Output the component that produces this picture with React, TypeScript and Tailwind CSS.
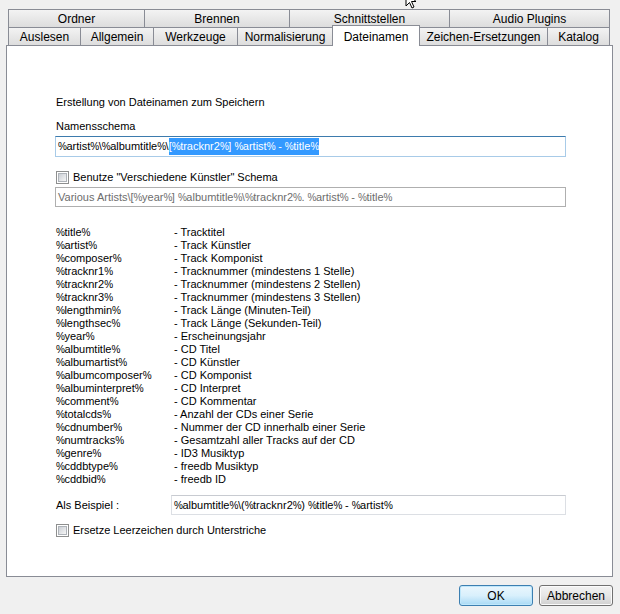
import React from "react";

const font = { fontFamily: '"Liberation Sans", Arial, sans-serif' };

const row1 = [
  { label: "Ordner", w: 137 },
  { label: "Brennen", w: 145 },
  { label: "Schnittstellen", w: 160 },
  { label: "Audio Plugins", w: 160 },
];

const row2 = [
  { label: "Auslesen", w: 73 },
  { label: "Allgemein", w: 73 },
  { label: "Werkzeuge", w: 84 },
  { label: "Normalisierung", w: 95 },
  { label: "Dateinamen", w: 87, active: true },
  { label: "Zeichen-Ersetzungen", w: 128 },
  { label: "Katalog", w: 62 },
];

const vars: [string, string][] = [
  ["%title%", "- Tracktitel"],
  ["%artist%", "- Track Künstler"],
  ["%composer%", "- Track Komponist"],
  ["%tracknr1%", "- Tracknummer (mindestens 1 Stelle)"],
  ["%tracknr2%", "- Tracknummer (mindestens 2 Stellen)"],
  ["%tracknr3%", "- Tracknummer (mindestens 3 Stellen)"],
  ["%lengthmin%", "- Track Länge (Minuten-Teil)"],
  ["%lengthsec%", "- Track Länge (Sekunden-Teil)"],
  ["%year%", "- Erscheinungsjahr"],
  ["%albumtitle%", "- CD Titel"],
  ["%albumartist%", "- CD Künstler"],
  ["%albumcomposer%", "- CD Komponist"],
  ["%albuminterpret%", "- CD Interpret"],
  ["%comment%", "- CD Kommentar"],
  ["%totalcds%", "- Anzahl der CDs einer Serie"],
  ["%cdnumber%", "- Nummer der CD innerhalb einer Serie"],
  ["%numtracks%", "- Gesamtzahl aller Tracks auf der CD"],
  ["%genre%", "- ID3 Musiktyp"],
  ["%cddbtype%", "- freedb Musiktyp"],
  ["%cddbid%", "- freedb ID"],
];

function P({ t }: { t: string }) {
  const parts = t.split("%");
  return (
    <>
      {parts.map((p, i) => (
        <React.Fragment key={i}>
          {i > 0 && <span className="text-[10px] tracking-[-0.5px]">%</span>}
          {p}
        </React.Fragment>
      ))}
    </>
  );
}

function Checkbox() {
  return (
    <div className="w-[13px] h-[13px] border border-[#8e8f8f] bg-white flex items-center justify-center shrink-0">
      <div className="w-[9px] h-[9px] bg-gradient-to-br from-[#cbcfd5] to-[#f6f6f6] border border-[#aeb3b9]" />
    </div>
  );
}

export default function App() {
  return (
    <div
      className="relative w-[620px] h-[614px] bg-[#f0f0f0] text-[11px] text-black overflow-hidden"
      style={font}
    >
      {/* cursor */}
      <svg className="absolute left-[405px] top-[-9px]" width="14" height="20" viewBox="0 0 14 20">
        <path d="M1 1 L1 15 L4.5 11.5 L7 17 L9 16 L6.5 10.5 L11 10.5 Z" fill="white" stroke="black" strokeWidth="1" />
      </svg>

      <div className="pt-[9px] pl-[8px]">
        {/* row 1 */}
        <div className="flex h-[18px]">
          {row1.map((t, i) => (
            <div
              key={t.label}
              className={`h-[18px] border-t border-r border-[#898c95] bg-gradient-to-b from-[#f3f3f3] to-[#dddddd] flex items-center justify-center text-[12px] ${i === 0 ? "border-l" : ""}`}
              style={{ width: t.w }}
            >
              {t.label}
            </div>
          ))}
        </div>
        {/* row 2 */}
        <div className="flex h-[18px] relative">
          {row2.map((t, i) =>
            t.active ? (
              <div
                key={t.label}
                className="relative z-10 h-[21px] -mt-[2px] border-t border-r border-l border-[#898c95] bg-white flex items-start justify-center pt-[2px] text-[12px] -ml-px"
                style={{ width: t.w + 1 }}
              >
                {t.label}
              </div>
            ) : (
              <div
                key={t.label}
                className={`h-[18px] border-t border-r border-[#898c95] bg-gradient-to-b from-[#f3f3f3] to-[#dddddd] flex items-center justify-center text-[12px] ${i === 0 ? "border-l" : ""}`}
                style={{ width: t.w }}
              >
                {t.label}
              </div>
            )
          )}
        </div>
      </div>

      {/* panel */}
      <div className="ml-[6px] w-[607px] h-[532px] border border-[#898c95] bg-white pl-[49px] pt-[50px]">
        <div className="h-[13px] leading-[13px]">Erstellung von Dateinamen zum Speichern</div>
        <div className="h-[13px] leading-[13px] mt-[11px]">Namensschema</div>
        <div className="mt-[3px] -ml-[1px] w-[511px] h-[21px] border border-[#a8cbe8] border-t-[#3d7bad] flex items-center pl-[2px] whitespace-pre">
          <span><P t="%artist%\%albumtitle%\" /></span>
          <span className="bg-[#3399ff] text-white"><P t="[%tracknr2%] %artist% - %title%" /></span>
        </div>
        <div className="mt-[14px] flex items-center gap-[4px] h-[13px]">
          <Checkbox />
          <span>Benutze "Verschiedene Künstler" Schema</span>
        </div>
        <div className="mt-[3px] -ml-[1px] w-[511px] h-[20px] border border-[#afafaf] flex items-center pl-[2px] text-[#6d6d6d] whitespace-pre">
          <P t="Various Artists\[%year%] %albumtitle%\%tracknr2%. %artist% - %title%" />
        </div>

        <div className="mt-[19px] flex flex-col">
          {vars.map(([a, b]) => (
            <div key={a} className="flex h-[13px] leading-[13px]">
              <div className="w-[118px] shrink-0"><P t={a} /></div>
              <div>{b}</div>
            </div>
          ))}
        </div>

        <div className="mt-[9px] flex items-center h-[20px]">
          <div className="w-[115px] shrink-0">Als Beispiel :</div>
          <div className="w-[395px] h-[20px] border border-[#dcdfe4] border-t-[#c8cbd1] flex items-center pl-[2px] whitespace-pre">
            <P t="%albumtitle%\(%tracknr2%) %title% - %artist%" />
          </div>
        </div>
        <div className="mt-[9px] flex items-center gap-[4px] h-[13px]">
          <Checkbox />
          <span>Ersetze Leerzeichen durch Unterstriche</span>
        </div>
      </div>

      {/* buttons */}
      <div className="flex justify-end gap-[6px] pr-[7px] mt-[8px]">
        <button className="w-[74px] h-[21px] rounded-[3px] border border-[#3c7fb1] bg-gradient-to-b from-[#eaf6fd] via-[#d9f0fc] to-[#a7d9f5] text-[12px] flex items-center justify-center shadow-[inset_0_0_0_1px_#bfe7fb]" style={font}>
          OK
        </button>
        <button className="w-[74px] h-[21px] rounded-[3px] border border-[#707070] bg-gradient-to-b from-[#f2f2f2] via-[#e6e6e6] to-[#d0d0d0] text-[12px] flex items-center justify-center shadow-[inset_0_0_0_1px_#fbfbfb]" style={font}>
          Abbrechen
        </button>
      </div>
    </div>
  );
}
